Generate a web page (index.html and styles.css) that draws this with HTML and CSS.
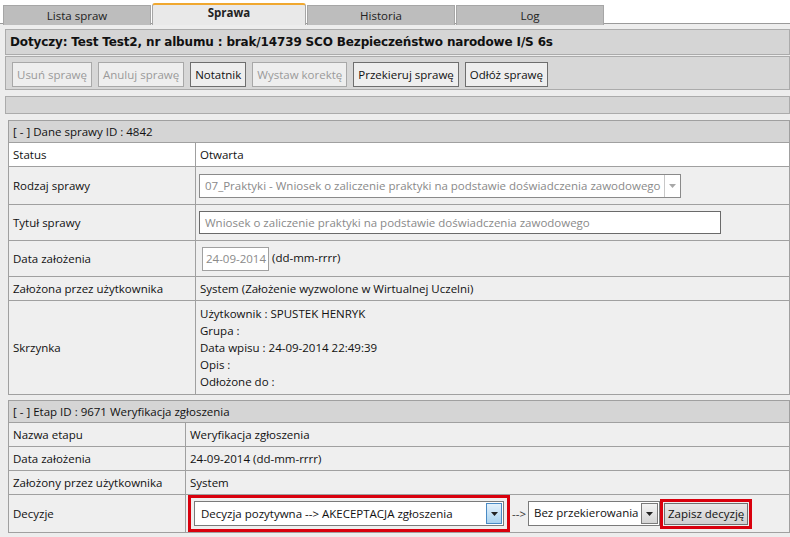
FILE: index.html
```html
<!DOCTYPE html>
<html lang="pl">
<head>
    <meta charset="UTF-8">
    <title>Sprawa</title>
    <link rel="stylesheet" href="styles.css">
</head>
<body>
    <div class="tabs">
        <div class="tab">Lista spraw</div>
        <div class="tab tab-active">Sprawa</div>
        <div class="tab">Historia</div>
        <div class="tab">Log</div>
    </div>

    <div class="page">
        <div class="subject">Dotyczy: Test Test2, nr albumu : brak/14739 SCO Bezpieczeństwo narodowe I/S 6s</div>

        <div class="toolbar">
            <button class="btn" disabled>Usuń sprawę</button>
            <button class="btn" disabled>Anuluj sprawę</button>
            <button class="btn">Notatnik</button>
            <button class="btn" disabled>Wystaw korektę</button>
            <button class="btn">Przekieruj sprawę</button>
            <button class="btn">Odłóż sprawę</button>
        </div>

        <div class="empty-bar"></div>

        <table class="data data-case">
            <tr><th colspan="2">[ - ] Dane sprawy ID : 4842</th></tr>
            <tr class="row-hover"><td class="label">Status</td><td>Otwarta</td></tr>
            <tr class="row-field">
                <td class="label">Rodzaj sprawy</td>
                <td>
                    <div class="select select-disabled">
                        <span class="select-text">07_Praktyki - Wniosek o zaliczenie praktyki na podstawie doświadczenia zawodowego</span>
                        <span class="select-arrow"><svg width="7" height="4" viewBox="0 0 7 4"><path d="M0 0h7L3.5 4z" fill="#a8a8a8"/></svg></span>
                    </div>
                </td>
            </tr>
            <tr class="row-field">
                <td class="label">Tytuł sprawy</td>
                <td><div class="input input-title">Wniosek o zaliczenie praktyki na podstawie doświadczenia zawodowego</div></td>
            </tr>
            <tr class="row-field">
                <td class="label">Data założenia</td>
                <td><span class="input input-date">24-09-2014</span> (dd-mm-rrrr)</td>
            </tr>
            <tr><td class="label">Założona przez użytkownika</td><td>System (Założenie wyzwolone w Wirtualnej Uczelni)</td></tr>
            <tr class="row-box">
                <td class="label">Skrzynka</td>
                <td>
                    <div>Użytkownik : SPUSTEK HENRYK</div>
                    <div>Grupa :</div>
                    <div>Data wpisu : 24-09-2014 22:49:39</div>
                    <div>Opis :</div>
                    <div>Odłożone do :</div>
                </td>
            </tr>
        </table>

        <table class="data data-stage">
            <tr><th colspan="2">[ - ] Etap ID : 9671 Weryfikacja zgłoszenia</th></tr>
            <tr><td class="label">Nazwa etapu</td><td>Weryfikacja zgłoszenia</td></tr>
            <tr><td class="label">Data założenia</td><td>24-09-2014 (dd-mm-rrrr)</td></tr>
            <tr><td class="label">Założony przez użytkownika</td><td>System</td></tr>
            <tr class="row-decision">
                <td class="label">Decyzje</td>
                <td>
                    <div class="decision">
                        <div class="mark">
                            <div class="select select-decision">
                                <span class="select-text">Decyzja pozytywna --&gt; AKECEPTACJA zgłoszenia</span>
                                <span class="select-arrow arrow-blue"><svg width="7" height="4" viewBox="0 0 7 4"><path d="M0 0h7L3.5 4z" fill="#222"/></svg></span>
                            </div>
                        </div>
                        <span class="link-arrow">--&gt;</span>
                        <div class="select select-redirect">
                            <span class="select-text">Bez przekierowania</span>
                            <span class="select-arrow"><svg width="7" height="4" viewBox="0 0 7 4"><path d="M0 0h7L3.5 4z" fill="#222"/></svg></span>
                        </div>
                        <div class="mark mark-btn">
                            <button class="btn-save">Zapisz decyzję</button>
                        </div>
                    </div>
                </td>
            </tr>
        </table>
    </div>
</body>
</html>
```

FILE: styles.css
```css
body {
    margin: 0;
    background-color: #fff;
    font-family: "Open Sans", "Noto Sans", sans-serif;
    font-size: 11.5px;
    color: #111;
}

.tabs {
    display: flex;
    height: 24px;
    padding-left: 3px;
    border-bottom: 1px solid #9a9a9a;
    box-sizing: border-box;
}

.tab {
    width: 146px;
    height: 19px;
    margin-top: 5px;
    margin-right: 1px;
    background-color: #bdbdbd;
    border: 1px solid #a6a6a6;
    border-bottom: none;
    text-align: center;
    line-height: 19px;
    color: #222;
}

.tab-active {
    width: 152px;
    height: 20px;
    margin-top: 3px;
    background-color: #e9e9e9;
    border-top: 2px solid #f0a830;
    border-radius: 3px 3px 0 0;
    font-weight: bold;
    line-height: 16px;
}

.page {
    background-color: #ededed;
    padding: 5px 0 10px 5px;
}

.subject {
    height: 24px;
    line-height: 24px;
    padding-left: 4px;
    background-color: #d5d5d5;
    border: 1px solid #ababab;
    font-family: "DejaVu Sans", Verdana, sans-serif;
    font-weight: bold;
    font-size: 12px;
    letter-spacing: -0.15px;
    color: #111;
}

.toolbar {
    display: flex;
    gap: 6px;
    height: 34px;
    align-items: center;
    padding-left: 6px;
    margin-top: 1px;
    background-color: #d7d7d7;
    border: 1px solid #ababab;
    box-sizing: border-box;
}

.btn {
    height: 25px;
    margin-top: 3px;
    padding: 0 4px;
    background-color: #eeeeee;
    border: 1px solid #6e6e6e;
    font-family: inherit;
    font-size: 11.5px;
    color: #111;
}

.btn:disabled {
    border-color: #a8a8a8;
    color: #9a9a9a;
}

.empty-bar {
    height: 16px;
    margin-top: 6px;
    background-color: #d5d5d5;
    border: 1px solid #ababab;
}

.data {
    width: calc(100% - 3px);
    margin-left: 3px;
    border-collapse: collapse;
    background-color: #efefef;
}

.data-case {
    margin-top: 6px;
}

.data-stage {
    margin-top: 5px;
}

.data th {
    height: 21px;
    padding: 0 4px;
    background-color: #d5d5d5;
    border: 1px solid #a0a0a0;
    text-align: left;
    font-weight: normal;
}

.data td {
    height: 23px;
    padding: 0 4px;
    border: 1px solid #a0a0a0;
    vertical-align: middle;
}

.data-case .label {
    width: 178px;
}

.data-stage .label {
    width: 168px;
}

.row-hover td {
    background-color: #fff;
}

.row-field td {
    height: 35px;
}

.row-field:nth-child(3) td {
    height: 37px;
}

.row-box td {
    height: 93px;
    line-height: 17px;
}

.select {
    display: flex;
    align-items: stretch;
    height: 24px;
    background-color: #fff;
    border: 1px solid #6a6a6a;
    box-sizing: border-box;
}

.select-text {
    flex: 1;
    padding-left: 6px;
    line-height: 22px;
    white-space: nowrap;
    overflow: hidden;
}

.select-arrow {
    width: 15px;
    display: flex;
    align-items: center;
    justify-content: center;
    border-left: 1px solid #9a9a9a;
    background-color: #f0f0f0;
}

.select-disabled {
    width: 482px;
    margin-left: -1px;
    border-color: #8a8a8a;
}

.select-disabled .select-text {
    padding-left: 5px;
    color: #8a8a8a;
}

.select-disabled .select-arrow {
    background-color: #fff;
    border-left-color: #c8c8c8;
}

.input {
    background-color: #fff;
    border: 1px solid #6a6a6a;
    box-sizing: border-box;
    color: #8a8a8a;
}

.input-title {
    width: 522px;
    height: 23px;
    margin-left: -1px;
    padding-left: 5px;
    line-height: 21px;
}

.input-date {
    display: inline-block;
    width: 67px;
    height: 24px;
    margin-left: 2px;
    padding-left: 3px;
    line-height: 22px;
    vertical-align: middle;
    border-color: #a0a0a0;
}

.row-decision td {
    height: 36px;
}

.decision {
    display: flex;
    align-items: center;
    margin-left: -2px;
}

.mark {
    border: 3px solid #d9000d;
    padding: 3px;
}

.select-decision {
    width: 310px;
    height: 25px;
    border-color: #7a7a7a;
}

.select-decision .select-text {
    line-height: 23px;
}

.arrow-blue {
    width: 14px;
    margin: 1px;
    background: linear-gradient(#e4f1fb, #a9d3f0);
    border: 1px solid #4a8ac4;
}

.link-arrow {
    margin: 0 2px;
    color: #333;
}

.select-redirect {
    width: 132px;
    height: 25px;
    border-color: #7a7a7a;
}

.select-redirect .select-text {
    padding-left: 5px;
}

.select-redirect .select-arrow {
    background: linear-gradient(#f4f4f4, #d4d4d4);
    border: 1px solid #7a7a7a;
    margin: 1px;
}

.mark-btn {
    padding: 1px;
    margin-left: 0;
}

.btn-save {
    height: 22px;
    padding: 0 3px;
    background: linear-gradient(#e8e8e8, #d0d0d0);
    border: 1px solid #707070;
    font-family: inherit;
    font-size: 11.5px;
    color: #111;
}
```
